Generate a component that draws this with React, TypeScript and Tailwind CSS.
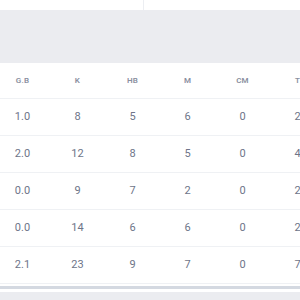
const headers = ["G.B", "K", "HB", "M", "CM", "T"];

const rows = [
  ["1.0", "8", "5", "6", "0", "2"],
  ["2.0", "12", "8", "5", "0", "4"],
  ["0.0", "9", "7", "2", "0", "2"],
  ["0.0", "14", "6", "6", "0", "2"],
  ["2.1", "23", "9", "7", "0", "7"],
];

export default function App() {
  return (
    <div className="w-[300px] h-[300px] overflow-hidden bg-white font-['Roboto',sans-serif]">
      <div className="flex h-[10px]">
        <div className="w-[144px] border-r border-[#eceef2]" />
        <div className="flex-1" />
      </div>
      <div className="h-[53px] bg-[#ebecf0]" />
      <div className="-ml-[5px] w-[330px]">
        <div className="grid grid-cols-6 h-[36px] items-center border-b border-[#eff1f4]">
          {headers.map((h) => (
            <div key={h} className="text-center text-[8px] font-semibold tracking-wide text-[#8a90a0]">
              {h}
            </div>
          ))}
        </div>
        {rows.map((r, i) => (
          <div key={i} className="grid grid-cols-6 h-[37px] items-center border-b border-[#eff1f4]">
            {r.map((c, j) => (
              <div key={j} className="text-center text-[11px] text-[#6e7589]">
                {c}
              </div>
            ))}
          </div>
        ))}
      </div>
      <div className="h-[2px]" />
      <div className="h-[3px] bg-[#d4d9e1]" />
      <div className="h-[3px]" />
      <div className="h-[10px] bg-[#ebecf0]" />
    </div>
  );
}
